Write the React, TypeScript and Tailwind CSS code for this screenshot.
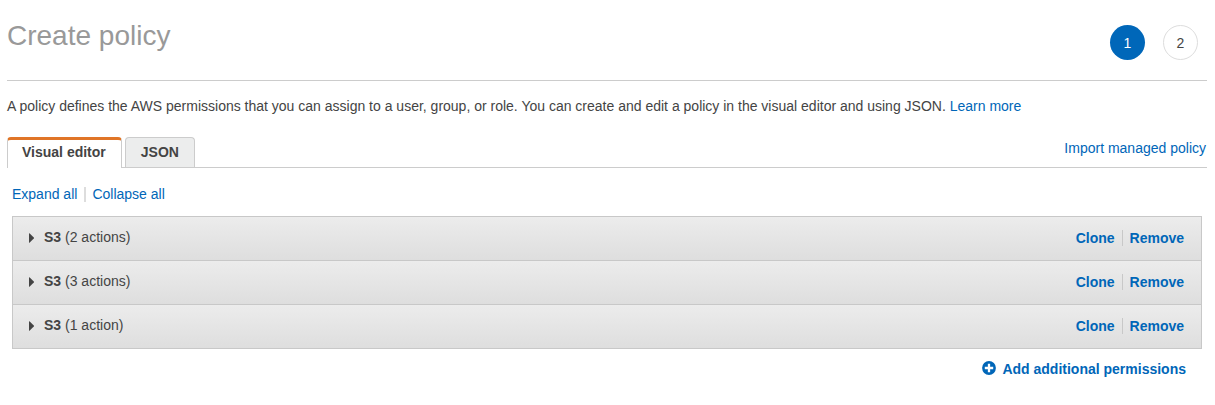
import React from "react";

const linkColor = "text-[#0066b8] hover:underline";

const statements = [
  { service: "S3", actions: "(2 actions)" },
  { service: "S3", actions: "(3 actions)" },
  { service: "S3", actions: "(1 action)" },
];

function Header() {
  return (
    <header className="flex items-start justify-between border-b border-[#ccc] pr-[9px] pb-5 pt-5">
      <h1 className="text-[28px] leading-8 text-[#999]">Create policy</h1>
      <ol className="flex gap-[18px] pt-[5px]">
        <li className="flex size-[35px] items-center justify-center rounded-full bg-[#0067b9] text-white" aria-current="step">
          1
        </li>
        <li className="flex size-[35px] items-center justify-center rounded-full border border-[#ddd] bg-white">2</li>
      </ol>
    </header>
  );
}

function Tabs() {
  return (
    <div className="mt-[21px] flex items-end justify-between border-b border-[#ccc]">
      <div role="tablist" className="-mb-px flex items-end gap-[3px]">
        <button
          role="tab"
          aria-selected="true"
          className="h-[31px] rounded-t border-x border-t-[3px] border-x-[#ccc] border-t-[#e07527] bg-white pb-[5px] pl-[14px] pr-[15px] font-bold"
        >
          Visual editor
        </button>
        <button
          role="tab"
          aria-selected="false"
          className="mb-px h-[30px] rounded-t border-x border-t border-[#ccc] bg-[#eceded] px-[15px] pb-[2px] font-bold"
        >
          JSON
        </button>
      </div>
      <a href="#import" className={`mb-[9px] mr-px ${linkColor}`}>
        Import managed policy
      </a>
    </div>
  );
}

function Statement({ service, actions }: { service: string; actions: string }) {
  return (
    <li className="flex h-11 items-center justify-between border-b border-[#c8c8c8] bg-linear-to-b from-[#ececec] to-[#dedede] pb-[2px] pl-4 pr-[17px]">
      <button className="flex items-center gap-[10px] pb-[2px]" aria-expanded="false">
        <svg width="5" height="10" viewBox="0 0 5 10" className="mt-[2px]" fill="#444" aria-hidden="true">
          <path d="M0 0.4Q0 0 .5 .3L4.8 4.5Q5.2 5 4.8 5.5L.5 9.7Q0 10 0 9.6Z" />
        </svg>
        <span>
          <b>{service}</b> {actions}
        </span>
      </button>
      <div className="flex items-center font-bold text-shadow-[0_1px_0_#fff]">
        <button className={linkColor}>Clone</button>
        <span className="mx-[7px] h-4 w-px bg-[#c8c8c8]" />
        <button className={linkColor}>Remove</button>
      </div>
    </li>
  );
}

export default function App() {
  return (
    <div className="bg-white pl-[7px] pr-2 font-['Liberation_Sans',Arial,sans-serif] text-sm text-[#444]">
      <Header />
      <p className="mt-[15px]">
        A policy defines the AWS permissions that you can assign to a user, group, or role. You can create and edit a
        policy in the visual editor and using JSON.{" "}
        <a href="#learn" className={linkColor}>
          Learn more
        </a>
      </p>
      <Tabs />
      <main className="px-[5px] pt-4">
        <div className="flex items-center">
          <button className={linkColor}>Expand all</button>
          <span className="ml-[7px] mr-[6px] h-[15px] w-[2px] bg-[#ddd]" />
          <button className={linkColor}>Collapse all</button>
        </div>
        <ul className="mt-3 border-x border-t border-[#c8c8c8]">
          {statements.map((s) => (
            <Statement key={s.actions} service={s.service} actions={s.actions} />
          ))}
        </ul>
        <div className="flex justify-end pr-4 pt-[10px]">
          <button className={`flex items-center gap-[6px] font-bold ${linkColor}`}>
            <svg width="14" height="14" viewBox="0 0 14 14" className="mb-[2px]" aria-hidden="true">
              <circle cx="7" cy="7" r="6.9" fill="#0066b8" />
              <path d="M7 2.8V11.2M2.8 7H11.2" stroke="white" strokeWidth="2.3" />
            </svg>
            Add additional permissions
          </button>
        </div>
      </main>
    </div>
  );
}
